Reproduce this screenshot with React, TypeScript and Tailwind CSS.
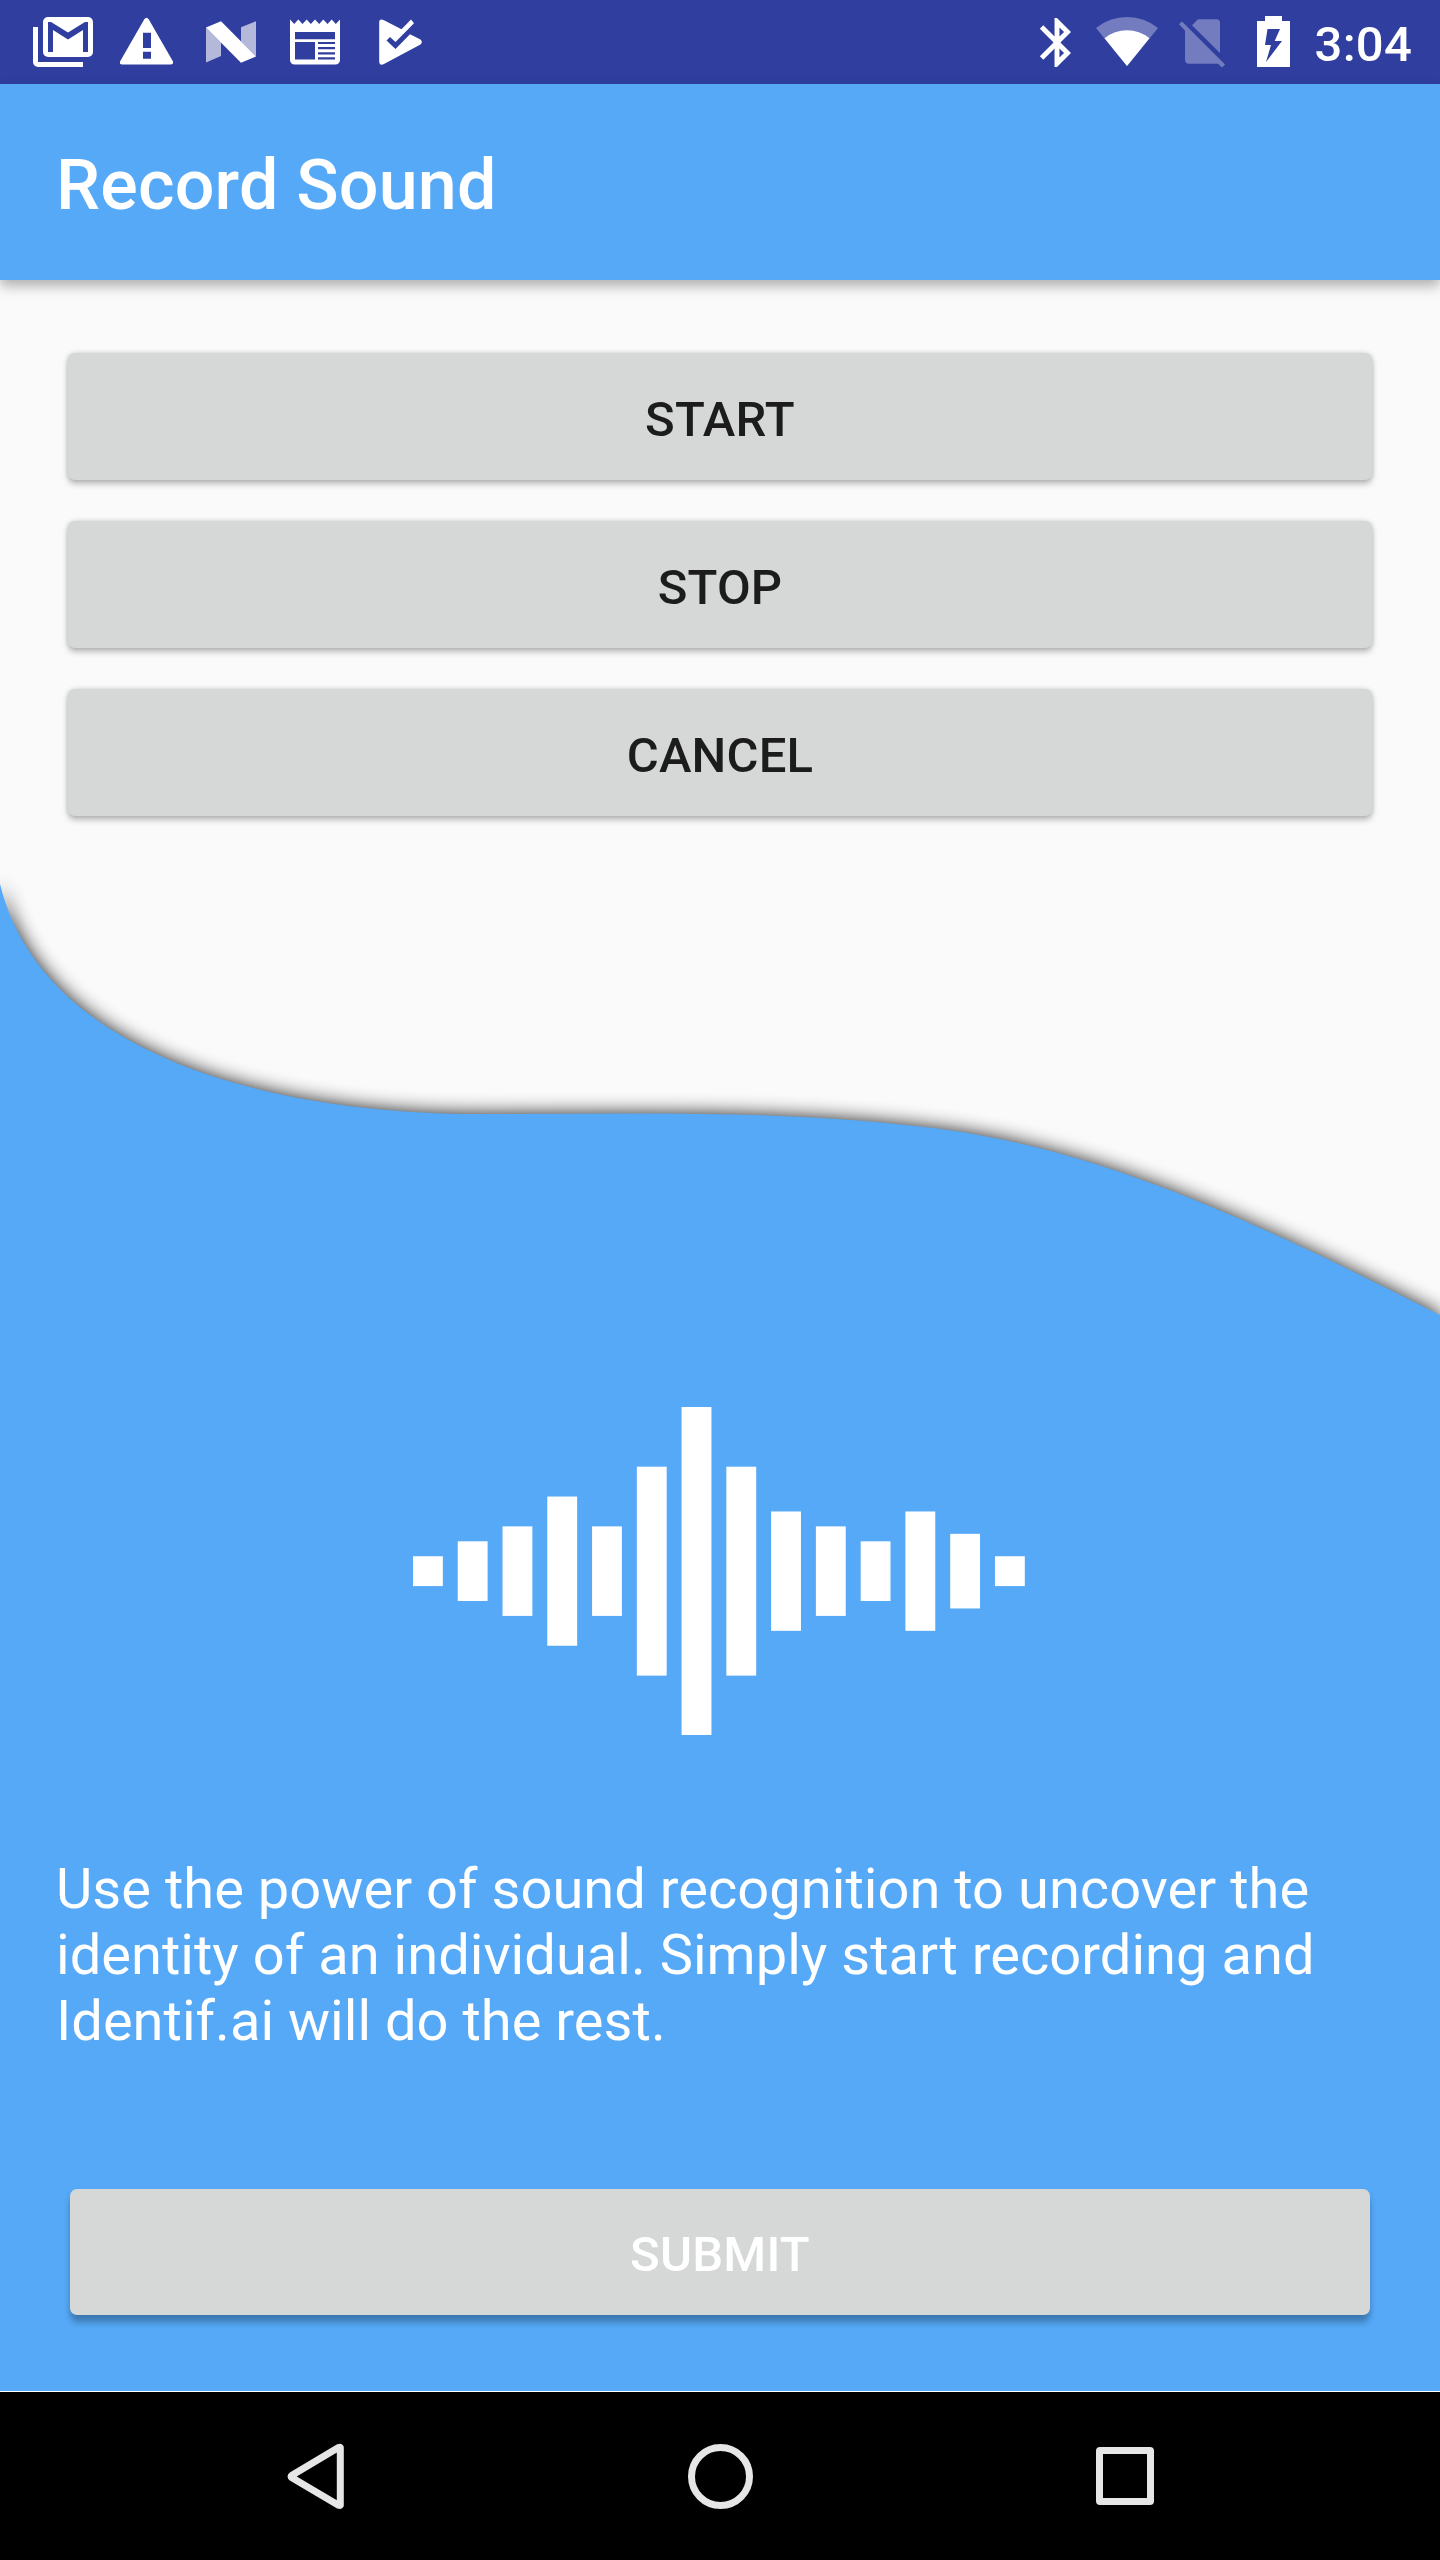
import type { ReactNode } from "react";

function Glyph({ box, className, children }: { box: string; className: string; children: ReactNode }) {
  return (
    <svg viewBox={box} className={`h-[84px] shrink-0 ${className}`} fill="#ffffff">
      {children}
    </svg>
  );
}

function StatusBar() {
  return (
    <header className="flex h-[84px] shrink-0 items-center justify-between bg-[#303f9f] pr-7 pl-[33px]">
      <div className="flex">
        <Glyph box="33 0 60 84" className="w-[60px]">
          <path d="M33 27h5v35h45v5H38a5 5 0 0 1-5-5z" />
          <path
            fillRule="evenodd"
            d="M48 17h40a5 5 0 0 1 5 5v30a5 5 0 0 1-5 5H48a5 5 0 0 1-5-5V22a5 5 0 0 1 5-5zM48 22V52h5V30L68 39.5 83 30V52h5V22h-3L68 32.5 51 22z"
          />
        </Glyph>
        <Glyph box="120 0 54 84" className="ml-[27px] w-[54px]">
          <path
            fillRule="evenodd"
            d="M144.3 19.3q2.200-3 4.400 0L172.700 61q1.500 3.600-2 3.600H122.300q-3.500 0-2-3.600zM143 32.700v15.300h8V32.700zM143 51.700v7h8v-7z"
          />
        </Glyph>
        <Glyph box="206 0 50 84" className="ml-8 w-[50px]">
          <path opacity=".64" d="M206 27.500 221 42.500V56L206 62.500zM241 27.200 256 21.200V56.500L241 41.500z" />
          <path d="M206 27.500 221 21.300 256 56.500 241 62.700z" />
        </Glyph>
        <Glyph box="290 0 50 84" className="ml-[34px] w-[50px]">
          <path
            fillRule="evenodd"
            d="M290 19.500 294.200 24 298.300 19.500 302.500 24 306.700 19.500 310.800 24 315 19.500 319.200 24 323.300 19.500 327.500 24 331.700 19.500 335.800 24 340 19.500V60a4.500 4.500 0 0 1-4.500 4.500H294.500A4.500 4.500 0 0 1 290 60zM295 32v7.300h40V32zM295 42v17.500h20V42zM318 42v2h17v-2zM318 47v2.300h17V47zM318 52.200v2.300h17v-2.300zM318 57.300v2.200h17v-2.200z"
          />
        </Glyph>
        <Glyph box="379 0 44 84" className="ml-[39px] w-[44px]">
          <path d="M383.500 20Q379.200 18 379.200 22.500V61Q379.200 66 383.500 64.300L420.500 44.500Q423.200 42 420.500 39.500L410 34.300 395.500 49 386.500 40.500 390 37 395.500 42 414 23.300 411 19.500 401.500 29.300z" />
        </Glyph>
      </div>
      <div className="flex items-center">
        <Glyph box="1039 0 32 84" className="w-8">
          <path
            transform="translate(1027.600 13.100) scale(2.450)"
            d="M17.710 7.710L12 2h-1v7.590L6.410 5 5 6.410 10.590 12 5 17.590 6.410 19 11 14.410V22h1l5.710-5.710-4.300-4.290 4.300-4.290zM13 5.830l1.880 1.880L13 9.590V5.830zm1.880 10.460L13 18.170v-3.760l1.880 1.880z"
          />
        </Glyph>
        <Glyph box="1096 0 62 84" className="ml-[25px] w-[62px]">
          <path opacity=".32" d="M1127 66 1096 28A49.200 49.200 0 0 1 1158 28z" />
          <path d="M1127 66 1104.500 38.300A35.600 35.600 0 0 1 1149.500 38.300z" />
        </Glyph>
        <Glyph box="1179 0 46 84" className="ml-[21px] w-[46px]">
          <path
            opacity=".32"
            d="M1192 25.200 1198 19.300H1216.500Q1220 19.300 1220 22.800V53zM1182 21.500 1225 64.500 1222 67.500 1218 63.700H1189Q1185 63.700 1185 59.700V30.500L1179 24.300z"
          />
        </Glyph>
        <Glyph box="1257 0 33 84" className="ml-8 w-[33px]">
          <path
            fillRule="evenodd"
            d="M1265 16h17v5h8v46h-33V21h8zM1267.500 29 1265 45H1271L1266 62 1282 41H1274.700L1280 29z"
          />
        </Glyph>
        <span className="mt-[5px] ml-[25px] text-[49px] leading-none font-medium tracking-[0.25px]">3:04</span>
      </div>
    </header>
  );
}

function ActionButton({ label }: { label: string }) {
  return (
    <button className="h-[127px] w-full rounded-[7px] bg-[#d6d7d7] pt-[5px] text-[49px] leading-none font-medium tracking-[0.2px] text-black/87 shadow-[0_4px_6px_rgba(0,0,0,0.24),0_0_5px_rgba(0,0,0,0.16)]">
      {label}
    </button>
  );
}

const WAVE = "M0 884C40 1050 260 1114 480 1114C640 1114 800 1108.500 960 1131.700C1120 1157 1270 1229 1440 1315V2391H0Z";
const BARS = [2, 4, 6, 10, 6, 14, 22, 14, 8, 6, 4, 8, 5, 2];

function WaveBackdrop() {
  return (
    <svg viewBox="0 280 1440 2111" className="absolute inset-0 -z-10 h-full w-full">
      <defs>
        <filter id="soft" filterUnits="userSpaceOnUse" x="-60" y="800" width="1560" height="1650">
          <feGaussianBlur stdDeviation="9.5" />
        </filter>
      </defs>
      <path d={WAVE} fill="#000000" opacity="0.88" filter="url(#soft)" />
      <path d={WAVE} fill="#56a9f7" />
    </svg>
  );
}

function SoundBars() {
  return (
    <svg viewBox="0 0 41 22" className="mt-[591.200px] ml-[357.300px] h-[328.300px] w-[611.800px] shrink-0" fill="#ffffff">
      {BARS.map((h, i) => (
        <rect key={i} x={i * 3} y={11 - h / 2} width="2" height={h} />
      ))}
    </svg>
  );
}

function NavBar() {
  return (
    <nav className="flex h-[168px] shrink-0 items-center bg-black pl-[287px]">
      <svg viewBox="287 2443 58 67" className="h-[67px] w-[58px]" fill="none" stroke="#e6e6e6" strokeWidth="7" strokeLinejoin="round">
        <path d="M340.300 2447.500V2505.300Q340 2505.800 338.500 2505.300L292 2477.700Q290 2476.500 292 2475.200L338.500 2447.500Q340 2447 340.300 2447.500z" />
      </svg>
      <div className="ml-[343px] size-[65px] rounded-full border-[7.500px] border-[#e6e6e6]" />
      <div className="ml-[343px] size-[58px] rounded-[4px] border-[7px] border-[#e6e6e6]" />
    </nav>
  );
}

export default function App() {
  return (
    <div className="flex h-[2560px] w-[1440px] flex-col overflow-hidden bg-[#fafafa] font-[Roboto,sans-serif] text-white">
      <StatusBar />
      <div className="relative z-10 flex h-[196px] shrink-0 items-center bg-[#56a9f7] px-14 pt-1.5 shadow-[0_6px_12px_rgba(0,0,0,0.3)]">
        <h1 className="text-[70px] leading-[82px] font-medium tracking-[0.2px]">Record Sound</h1>
      </div>
      <main className="relative isolate flex h-[2112px] shrink-0 flex-col border-b border-white px-14 pt-[73px]">
        <WaveBackdrop />
        <div className="mx-3 flex shrink-0 flex-col gap-[41px]">
          <ActionButton label="START" />
          <ActionButton label="STOP" />
          <ActionButton label="CANCEL" />
        </div>
        <SoundBars />
        <p className="mt-[120.500px] text-[56px] leading-[66px] tracking-[0.035px]">
          Use the power of sound recognition to uncover the identity of an individual. Simply start recording and Identif.ai will do the rest.
        </p>
        <button className="mx-3.5 mt-[135px] h-[126px] shrink-0 rounded-[7px] bg-[#d6d7d7] pt-[5px] text-[49px] leading-none font-medium tracking-[0.2px] shadow-[0_9px_6px_-1px_rgba(0,0,0,0.2),0_4px_7px_rgba(0,0,0,0.14)]">
          SUBMIT
        </button>
      </main>
      <NavBar />
    </div>
  );
}
